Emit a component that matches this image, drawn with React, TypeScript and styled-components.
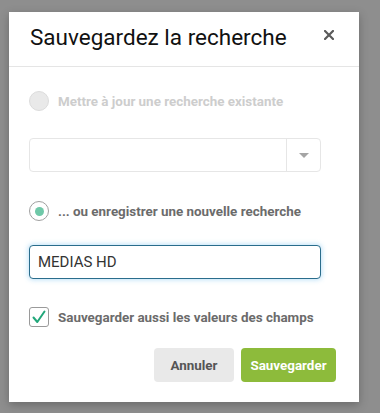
import React from "react";
import styled, { createGlobalStyle } from "styled-components";

const Global = createGlobalStyle`
  html, body { margin: 0; padding: 0; }
  body {
    background: #8e8e8e;
    font-family: Roboto, "Liberation Sans", Arial, sans-serif;
    width: 380px;
    height: 413px;
    overflow: hidden;
  }
`;

const Page = styled.div`
  padding: 12px 0 0 9px;
`;

const Modal = styled.div`
  width: 350px;
  height: 390px;
  background: #fff;
  box-sizing: border-box;
  display: flex;
  flex-direction: column;
  box-shadow: 0 3px 9px rgba(0, 0, 0, 0.25);
`;

const Header = styled.div`
  height: 55px;
  box-sizing: border-box;
  border-bottom: 1px solid #e5e5e5;
  display: flex;
  align-items: center;
  justify-content: space-between;
  padding: 0 24px 4px 21px;
`;

const Title = styled.h4`
  margin: 0;
  font-size: 22.5px;
  font-weight: 400;
  color: #111;
`;

const Close = styled.button`
  border: none;
  background: none;
  padding: 0;
  width: 12px;
  height: 12px;
  margin-top: -4px;
  display: flex;
  align-items: center;
  justify-content: center;
  cursor: pointer;
`;

const Body = styled.div`
  padding: 24px 23px 0 20px;
  display: flex;
  flex-direction: column;
`;

const OptionRow = styled.label<{ $disabled?: boolean; $mt?: number }>`
  display: flex;
  align-items: center;
  gap: 9px;
  margin-top: ${(p) => p.$mt ?? 0}px;
  font-size: 13.4px;
  font-weight: 700;
  color: ${(p) => (p.$disabled ? "#cdcdcd" : "#6b6b6b")};
  height: 20px;
`;

const Radio = styled.span<{ $disabled?: boolean; $checked?: boolean }>`
  width: 20px;
  height: 20px;
  box-sizing: border-box;
  border-radius: 50%;
  border: 1px solid ${(p) => (p.$disabled ? "#dcdcdc" : "#a0a0a0")};
  background: ${(p) => (p.$disabled ? "#e9e9e9" : "#fff")};
  display: flex;
  align-items: center;
  justify-content: center;
  flex-shrink: 0;
  &::after {
    content: "";
    display: ${(p) => (p.$checked ? "block" : "none")};
    width: 9px;
    height: 9px;
    border-radius: 50%;
    background: #6fc8a8;
  }
`;

const Select = styled.div`
  margin-top: 27px;
  width: 292px;
  height: 34px;
  box-sizing: border-box;
  border: 1px solid #e6e6e6;
  border-radius: 4px;
  display: flex;
`;

const SelectValue = styled.div`
  flex: 1;
`;

const SelectArrow = styled.div`
  width: 33px;
  border-left: 1px solid #e6e6e6;
  display: flex;
  align-items: center;
  justify-content: center;
  &::after {
    content: "";
    width: 0;
    height: 0;
    border-left: 5px solid transparent;
    border-right: 5px solid transparent;
    border-top: 5px solid #a5a5a5;
  }
`;

const TextInput = styled.input`
  margin-top: 24px;
  width: 292px;
  height: 34px;
  box-sizing: border-box;
  border: 1px solid #2a6d8c;
  border-radius: 4px;
  padding: 0 8px;
  font-family: Roboto, "Liberation Sans", Arial, sans-serif;
  font-size: 15px;
  color: #333;
  outline: none;
  box-shadow: 0 0 5px 1px rgba(110, 190, 240, 0.45);
`;

const CheckRow = styled.label`
  margin-top: 28px;
  display: flex;
  align-items: center;
  gap: 9px;
  font-size: 13.4px;
  font-weight: 700;
  color: #6b6b6b;
  height: 20px;
`;

const CheckBox = styled.span`
  width: 20px;
  height: 20px;
  box-sizing: border-box;
  border: 1px solid #9a9a9a;
  border-radius: 3px;
  display: flex;
  align-items: center;
  justify-content: center;
  flex-shrink: 0;
`;

const Footer = styled.div`
  margin-top: 21px;
  display: flex;
  justify-content: flex-end;
  gap: 7px;
`;

const Button = styled.button<{ $primary?: boolean }>`
  height: 34px;
  width: ${(p) => (p.$primary ? 95 : 80)}px;
  padding: 0;
  border: none;
  border-radius: 4px;
  font-family: Roboto, "Liberation Sans", Arial, sans-serif;
  font-size: 13.4px;
  font-weight: 700;
  background: ${(p) => (p.$primary ? "#8dbb3b" : "#e9e9e9")};
  color: ${(p) => (p.$primary ? "#fff" : "#555")};
  cursor: pointer;
`;

export default function App() {
  return (
    <>
      <Global />
      <Page>
        <Modal>
          <Header>
            <Title>Sauvegardez la recherche</Title>
            <Close aria-label="Fermer">
              <svg width="10" height="10" viewBox="0 0 10 10">
                <path d="M1 1L9 9M9 1L1 9" stroke="#5a5a5a" strokeWidth="2.2" strokeLinecap="square" />
              </svg>
            </Close>
          </Header>
          <Body>
            <OptionRow $disabled>
              <Radio $disabled />
              Mettre à jour une recherche existante
            </OptionRow>
            <Select>
              <SelectValue />
              <SelectArrow />
            </Select>
            <OptionRow $mt={29}>
              <Radio $checked />
              ... ou enregistrer une nouvelle recherche
            </OptionRow>
            <TextInput defaultValue="MEDIAS HD" />
            <CheckRow>
              <CheckBox>
                <svg width="16" height="16" viewBox="0 0 16 16">
                  <path d="M2.5 8.5L6.3 13L13.5 2.5" fill="none" stroke="#22a77a" strokeWidth="2" strokeLinecap="round" strokeLinejoin="round" />
                </svg>
              </CheckBox>
              Sauvegarder aussi les valeurs des champs
            </CheckRow>
            <Footer>
              <Button>Annuler</Button>
              <Button $primary>Sauvegarder</Button>
            </Footer>
          </Body>
        </Modal>
      </Page>
    </>
  );
}
